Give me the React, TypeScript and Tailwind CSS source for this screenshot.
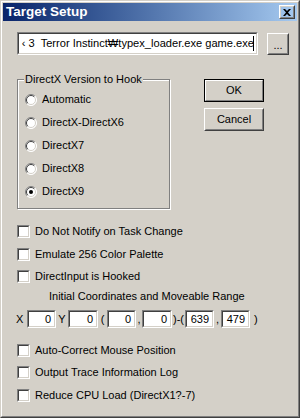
import React from 'react'

const face = 'bg-[#d4d0c8]'

const Sunken: React.FC<{ className?: string; children?: React.ReactNode }> = ({ className = '', children }) => (
  <div className={`border border-t-[#808080] border-l-[#808080] border-b-white border-r-white ${className}`}>
    <div className="w-full h-full border border-t-[#404040] border-l-[#404040] border-b-[#d4d0c8] border-r-[#d4d0c8] bg-white overflow-hidden">
      {children}
    </div>
  </div>
)

const Raised: React.FC<{ className?: string; isDefault?: boolean; children?: React.ReactNode }> = ({
  className = '',
  isDefault,
  children,
}) => {
  if (isDefault) {
    return (
      <div className={`border border-black ${className}`}>
        <div className="w-full h-full border border-t-white border-l-white border-b-[#808080] border-r-[#808080] flex items-center justify-center">
          {children}
        </div>
      </div>
    )
  }
  return (
    <div className={className}>
      <div className="w-full h-full border border-t-white border-l-white border-b-[#404040] border-r-[#404040]">
        <div className="w-full h-full border border-t-[#d4d0c8] border-l-[#d4d0c8] border-b-[#808080] border-r-[#808080] flex items-center justify-center">
          {children}
        </div>
      </div>
    </div>
  )
}

const Check: React.FC<{ label: string; h: string }> = ({ label, h }) => (
  <div className={`flex items-start pl-[14px] ${h}`}>
    <Sunken className="w-[13px] h-[13px] mt-[5px] shrink-0" />
    <span className="ml-[5px] leading-[22px]">{label}</span>
  </div>
)

const Radio: React.FC<{ label: string; checked?: boolean }> = ({ label, checked }) => (
  <div className="flex items-center h-[23px]">
    <svg width="12" height="12" viewBox="0 0 12 12" className="shrink-0">
      <circle cx="6" cy="6" r="5.5" fill="white" />
      <path d="M2.1 9.9 A5.5 5.5 0 0 1 9.9 2.1" fill="none" stroke="#808080" strokeWidth="1" />
      <path d="M9.9 2.1 A5.5 5.5 0 0 1 2.1 9.9" fill="none" stroke="#ffffff" strokeWidth="1" />
      <path d="M2.8 9.2 A4.5 4.5 0 0 1 9.2 2.8" fill="none" stroke="#404040" strokeWidth="1" />
      <path d="M9.2 2.8 A4.5 4.5 0 0 1 2.8 9.2" fill="none" stroke="#d4d0c8" strokeWidth="1" />
      {checked && <circle cx="6" cy="6" r="2" fill="black" />}
    </svg>
    <span className="ml-[5px]">{label}</span>
  </div>
)

const NumBox: React.FC<{ value: string; w: string }> = ({ value, w }) => (
  <Sunken className={`${w} h-[18px]`}>
    <div className="h-full flex items-center justify-end pr-[3px] leading-none">{value}</div>
  </Sunken>
)

const App: React.FC = () => {
  return (
    <div
      className="w-[300px] h-[418px] border border-t-[#d4d0c8] border-l-[#d4d0c8] border-b-[#404040] border-r-[#404040] text-[11px] text-black"
      style={{ fontFamily: '"Liberation Sans", Arial, sans-serif' }}
    >
      <div className="w-full h-full border border-t-white border-l-white border-b-[#808080] border-r-[#808080]">
        <div className={`w-full h-full ${face} p-[1px] flex flex-col`}>
          {/* Title bar */}
          <div className="h-[18px] shrink-0 bg-linear-to-r from-[#0a246a] to-[#a6caf0] flex items-center justify-between pl-[3px] pr-[2px]">
            <span className="text-white font-bold text-[13.5px] leading-none">Target Setup</span>
            <Raised className="w-[16px] h-[14px]">
              <svg width="8" height="7" viewBox="0 0 8 7">
                <path d="M0 0h2l2 2 2-2h2L5 3.5 8 7H6L4 5 2 7H0l3-3.5z" fill="black" />
              </svg>
            </Raised>
          </div>

          {/* Path row */}
          <div className="flex items-start mt-[11px] pl-[14px]">
            <Sunken className="w-[241px] h-[23px]">
              <div className="h-full flex items-center justify-end pr-[2px] whitespace-nowrap text-[11.1px]">
                <span>‹ 3&nbsp; Terror Instinct₩typex_loader.exe game.exe</span>
                <span className="w-px h-[15px] bg-black ml-[-1px] shrink-0" />
              </div>
            </Sunken>
            <Raised className="w-[22px] h-[22px] ml-[9px] mt-[1px]">
              <span className="leading-none mt-[3px]">...</span>
            </Raised>
          </div>

          {/* Group box + buttons */}
          <div className="flex items-start mt-[24px] pl-[14px]">
            <div className="relative w-[153px] h-[130px] border border-[#808080] shadow-[inset_1px_1px_0_white,1px_1px_0_white] pl-[7px] pt-[8px]">
              <span className={`absolute -top-[7px] left-[6px] px-[1px] ${face} leading-[13px]`}>
                DirectX Version to Hook
              </span>
              <Radio label="Automatic" />
              <Radio label="DirectX-DirectX6" />
              <Radio label="DirectX7" />
              <Radio label="DirectX8" />
              <Radio label="DirectX9" checked />
            </div>
            <div className="flex flex-col ml-[34px] gap-[6px]">
              <Raised isDefault className="w-[60px] h-[23px]">
                <span>OK</span>
              </Raised>
              <Raised className="w-[60px] h-[23px]">
                <span>Cancel</span>
              </Raised>
            </div>
          </div>

          {/* Options */}
          <div className="mt-[11px]">
            <Check label="Do Not Notify on Task Change" h="h-[23px]" />
            <Check label="Emulate 256 Color Palette" h="h-[22px]" />
            <Check label="DirectInput is Hooked" h="h-[22px]" />
          </div>

          <div className="h-[18px] flex items-center pl-[46px]">Initial Coordinates and Moveable Range</div>

          {/* Coordinates */}
          <div className="flex items-center h-[18px] mt-[5px] pl-[13px]">
            <span className="w-[11px]">X</span>
            <NumBox value="0" w="w-[29px]" />
            <span className="w-[12px] text-center">Y</span>
            <NumBox value="0" w="w-[30px]" />
            <span className="w-[9px] text-center">(</span>
            <NumBox value="0" w="w-[29px]" />
            <span className="w-[6px] text-center">,</span>
            <NumBox value="0" w="w-[30px]" />
            <span className="w-[13px] text-center">)-(</span>
            <NumBox value="639" w="w-[29px]" />
            <span className="w-[7px] text-center">,</span>
            <NumBox value="479" w="w-[29px]" />
            <span className="ml-[4px]">)</span>
          </div>

          <div className="mt-[11px]">
            <Check label="Auto-Correct Mouse Position" h="h-[22px]" />
            <Check label="Output Trace Information Log" h="h-[23px]" />
            <Check label="Reduce CPU Load (DirectX1?-7)" h="h-[22px]" />
          </div>
        </div>
      </div>
    </div>
  )
}

export default App
